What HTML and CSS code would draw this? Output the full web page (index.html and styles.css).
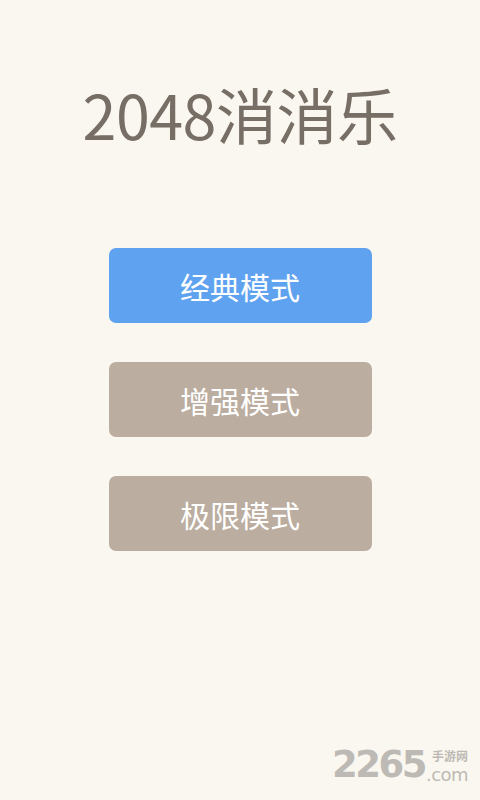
FILE: index.html
```html
<!DOCTYPE html>
<html lang="zh">
<head>
<meta charset="utf-8">
<link rel="stylesheet" href="styles.css">
</head>
<body>
<main class="screen">
  <h1 class="title">2048消消乐</h1>
  <div class="menu">
    <div class="btn btn-blue">经典模式</div>
    <div class="btn">增强模式</div>
    <div class="btn">极限模式</div>
  </div>
  <div class="watermark">
    <span class="wm-num">2265</span>
    <span class="wm-side">
      <span class="wm-cn">手游网</span>
      <span class="wm-com">.com</span>
    </span>
  </div>
</main>
</body>
</html>
```
FILE: styles.css
```css
* { box-sizing: border-box; }
html, body { margin: 0; padding: 0; }
body {
  background: #faf7f0;
  font-family: "Noto Sans CJK SC", "Noto Sans", sans-serif;
}
.screen {
  position: relative;
  width: 480px;
  height: 800px;
  display: flex;
  flex-direction: column;
  align-items: center;
}
.title {
  margin: 72px 0 0 0;
  font-size: 61px;
  font-weight: 400;
  line-height: 84px;
  color: #776e65;
  letter-spacing: -0.5px;
}
.menu {
  margin-top: 92px;
  display: flex;
  flex-direction: column;
  gap: 39px;
}
.btn {
  width: 263px;
  height: 75px;
  border-radius: 7px;
  background: #bbada0;
  color: #fff;
  font-size: 30px;
  display: flex;
  align-items: center;
  justify-content: center;
}
.btn-blue { background: #5fa3f0; }
.watermark {
  position: absolute;
  left: 332px;
  top: 745px;
  display: flex;
  align-items: flex-start;
  color: #bdbab5;
}
.wm-num {
  font-family: "DejaVu Sans", sans-serif;
  font-weight: 700;
  font-size: 37px;
  line-height: 40px;
  letter-spacing: -2.5px;
}
.wm-side {
  display: flex;
  flex-direction: column;
  align-items: flex-start;
  margin-left: 1px;
}
.wm-cn {
  font-size: 12px;
  line-height: 17px;
  font-weight: 700;
  margin: 2px 0 0 6px;
}
.wm-com {
  font-family: "DejaVu Sans", sans-serif;
  font-size: 18px;
  line-height: 21px;
  letter-spacing: -0.5px;
}
```
